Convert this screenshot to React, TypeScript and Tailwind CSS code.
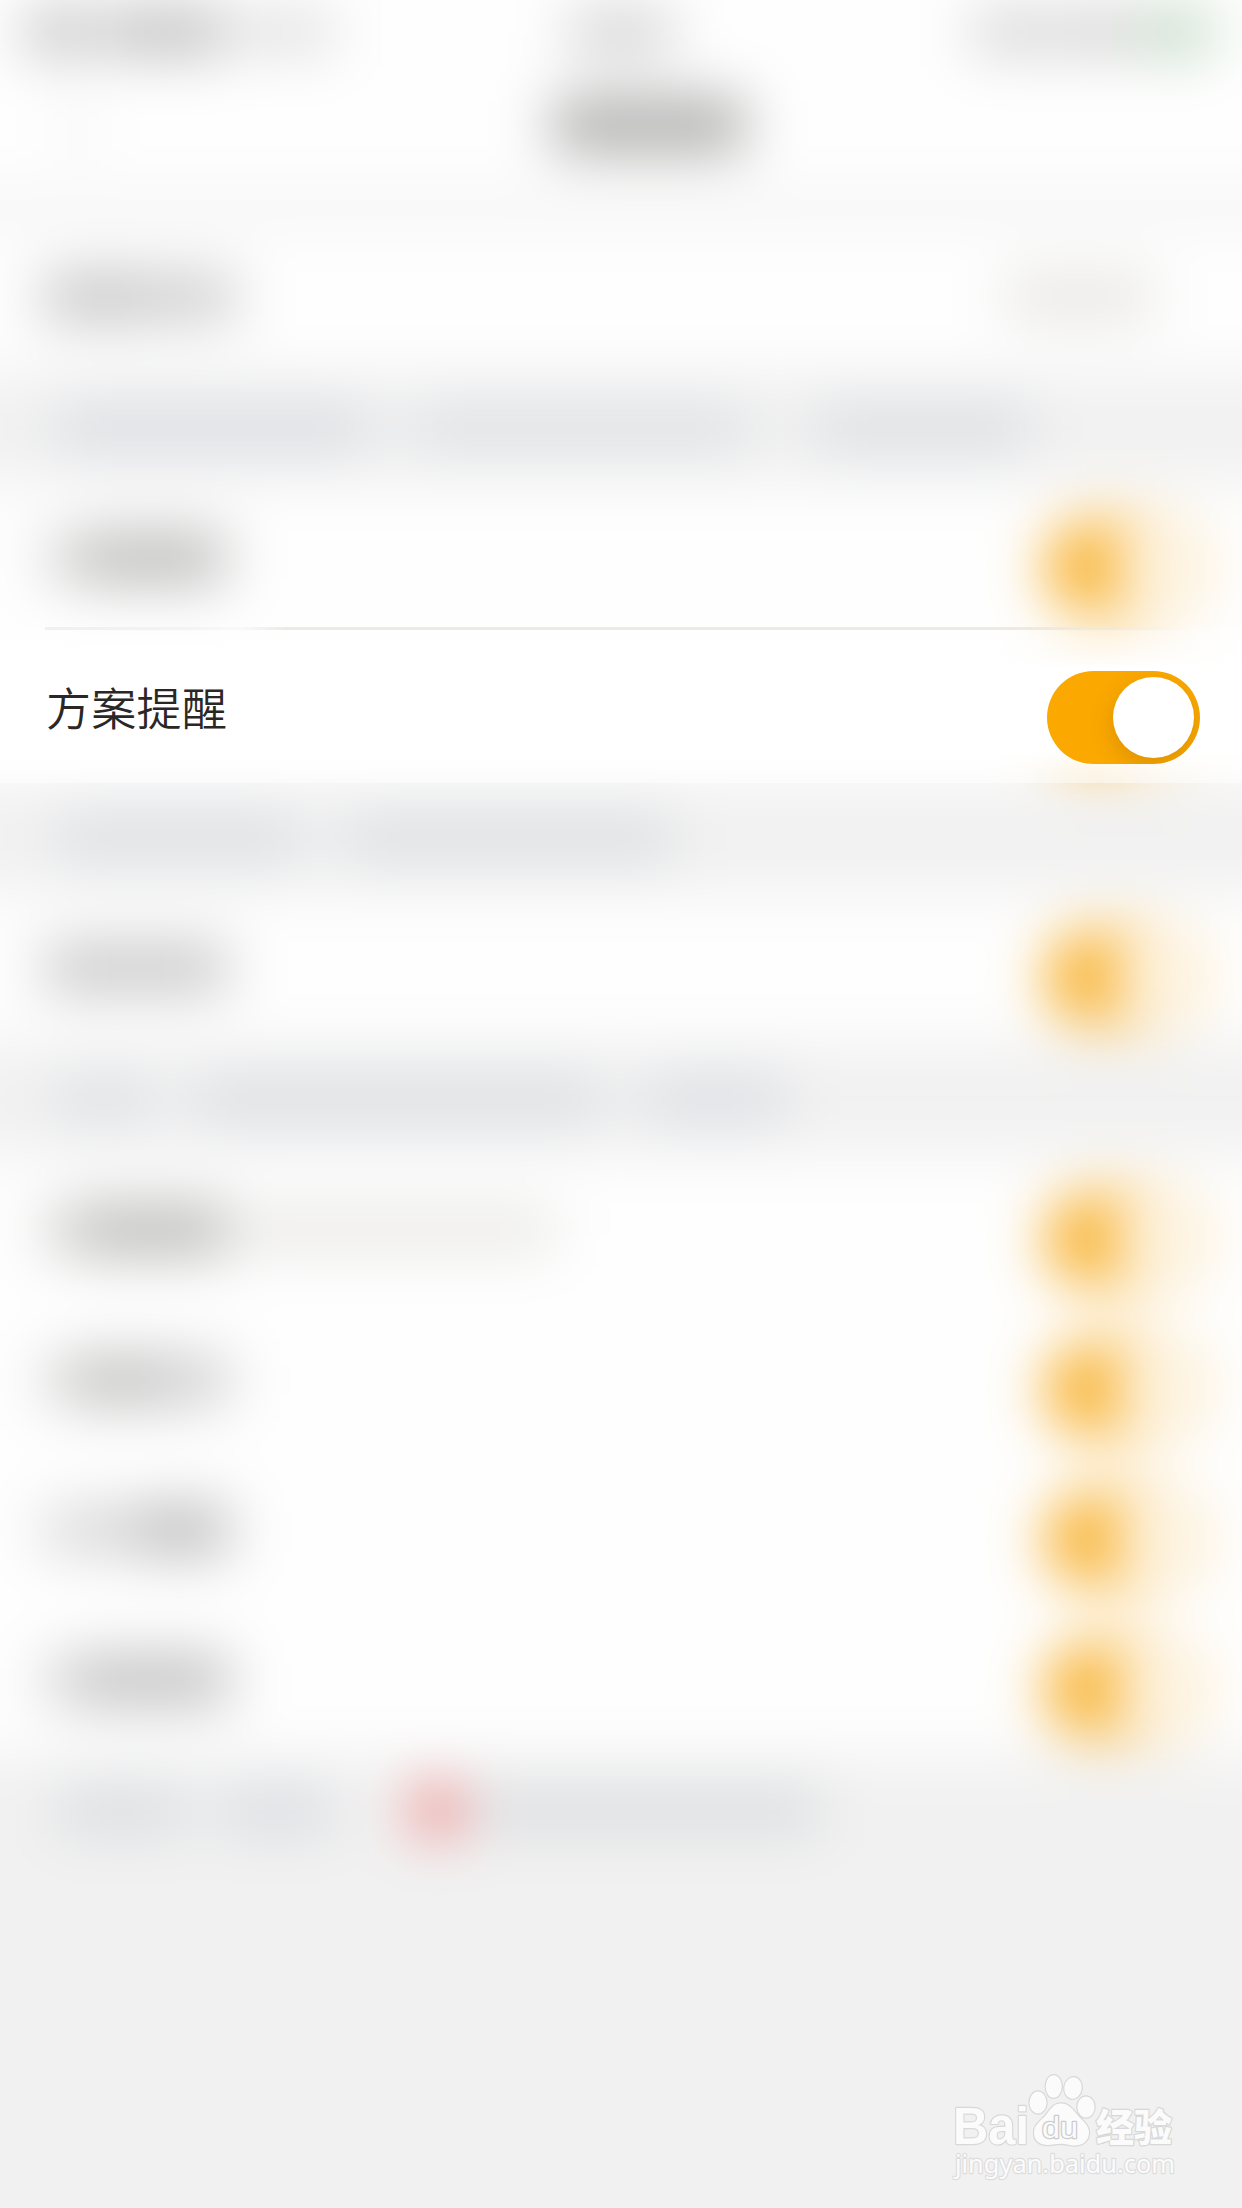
import clsx from 'clsx';

function Smudge({ className }: { className: string }) {
    return <span className={clsx('block shrink-0', className)} />;
}

function Toggle({ faded }: { faded?: boolean }) {
    return (
        <span
            className={clsx(
                'mt-[18px] flex h-[93px] w-[153px] shrink-0 items-center justify-end overflow-hidden rounded-full p-[6px]',
                faded ? 'bg-[#f8ae26]' : 'bg-[#fba800]',
            )}
        >
            <span
                className={clsx(
                    'h-[81px] w-[81px] rounded-full',
                    faded ? 'bg-[#fefaf3]' : 'bg-white shadow-[0_8px_24px_rgba(90,60,0,0.2)]',
                )}
            />
        </span>
    );
}

function Row({ children }: { children: React.ReactNode }) {
    return (
        <div className="flex h-[150px] items-center justify-between bg-[#fefefe] pl-[45px] pr-[43px]">
            <div className="flex items-center">{children}</div>
            <Toggle faded />
        </div>
    );
}

function BlurredPage() {
    return (
        <div className="-mx-[90px] -mt-[90px] flex h-[2388px] flex-col bg-[#f1f1f1] blur-[29px] [grid-area:1/1]">
            <div className="flex h-[285px] flex-col bg-[#fefefe] px-[90px] pt-[90px]">
                <div className="grid h-[64px] grid-cols-3 items-center">
                    <div className="flex items-center pl-[26px]">
                        <Smudge className="h-[42px] w-[66px] bg-[#bdbdbd]" />
                        <Smudge className="ml-3 h-[42px] w-[122px] bg-[#b8b8b8]" />
                        <Smudge className="ml-4 h-[36px] w-[92px] bg-[#dadada]" />
                    </div>
                    <Smudge className="h-[36px] w-[104px] justify-self-center bg-[#c8c8c8]" />
                    <div className="flex items-center justify-end pr-[30px]">
                        <Smudge className="h-[38px] w-[96px] bg-[#d0d0d0]" />
                        <Smudge className="ml-1 h-[38px] w-[70px] bg-[#cbcbcb]" />
                        <Smudge className="ml-1 h-[44px] w-[66px] bg-[#bed8c0]" />
                    </div>
                </div>
                <div className="flex h-[122px] items-center pl-[66px]">
                    <Smudge className="h-[44px] w-[22px] bg-[#eeeeee]" />
                    <Smudge className="ml-[465px] h-[52px] w-[192px] bg-[#a9a9a8]" />
                </div>
            </div>
            <div className="h-[27px] bg-[#f1f1f1]" />
            <div className="bg-[#fefefe] px-[90px]">
                <div className="flex h-[150px] items-center justify-between pl-[44px] pr-[90px]">
                    <div className="flex">
                        <Smudge className="h-[44px] w-[98px] bg-[#bebebe]" />
                        <Smudge className="h-[44px] w-[94px] bg-[#c8c8c8]" />
                    </div>
                    <Smudge className="h-[40px] w-[145px] bg-[#e4e2df]" />
                </div>
            </div>
            <div className="flex h-[111px] items-center px-[90px]">
                <Smudge className="ml-[57px] h-[40px] w-[312px] bg-[#d9dbe1]" />
                <Smudge className="ml-[44px] h-[40px] w-[334px] bg-[#dddfe3]" />
                <Smudge className="ml-[68px] h-[40px] w-[214px] bg-[#dadce1]" />
            </div>
            <div className="bg-[#fefefe] px-[90px]">
                <Row>
                    <Smudge className="h-[42px] w-[36px] bg-[#d3d3d2]" />
                    <Smudge className="h-[48px] w-[144px] bg-[#b7b7b6]" />
                </Row>
                <div className="flex h-[150px] items-center justify-end pr-[43px]">
                    <Toggle faded />
                </div>
            </div>
            <div className="flex h-[110px] items-center px-[90px]">
                <Smudge className="ml-[57px] h-[40px] w-[243px] bg-[#dadce1]" />
                <Smudge className="ml-[46px] h-[40px] w-[326px] bg-[#dadce0]" />
            </div>
            <div className="bg-[#fefefe] px-[90px]">
                <Row>
                    <Smudge className="h-[44px] w-[182px] bg-[#c1c1c1]" />
                </Row>
            </div>
            <div className="flex h-[112px] items-center px-[90px]">
                <Smudge className="ml-[57px] h-[40px] w-[95px] bg-[#dcdee3]" />
                <Smudge className="ml-[42px] h-[40px] w-[406px] bg-[#dadce1]" />
                <Smudge className="ml-[44px] h-[40px] w-[142px] bg-[#dadce2]" />
            </div>
            <div className="bg-[#fefefe] px-[90px]">
                <Row>
                    <Smudge className="h-[42px] w-[36px] bg-[#cfcfce]" />
                    <Smudge className="h-[48px] w-[148px] bg-[#b6b6b4]" />
                    <Smudge className="ml-4 h-[40px] w-[310px] bg-[#e8e7e5]" />
                </Row>
                <Row>
                    <Smudge className="h-[42px] w-[36px] bg-[#cfcfce]" />
                    <Smudge className="h-[46px] w-[80px] bg-[#babab9]" />
                    <Smudge className="h-[44px] w-[68px] bg-[#c9c9c9]" />
                </Row>
                <Row>
                    <Smudge className="h-[42px] w-[92px] bg-[#d2d2d2]" />
                    <Smudge className="h-[48px] w-[92px] bg-[#b8b8b8]" />
                </Row>
                <Row>
                    <Smudge className="h-[42px] w-[36px] bg-[#cfcfce]" />
                    <Smudge className="h-[46px] w-[148px] bg-[#bababa]" />
                </Row>
            </div>
            <div className="flex h-[110px] items-center px-[90px]">
                <Smudge className="ml-[57px] h-[40px] w-[130px] bg-[#d8dade]" />
                <Smudge className="ml-[34px] h-[40px] w-[112px] bg-[#d8dae0]" />
                <Smudge className="ml-[80px] h-[48px] w-[48px] rounded-full bg-[#ee6e6e]" />
                <Smudge className="ml-[14px] h-[40px] w-[346px] bg-[#d9dbde]" />
            </div>
        </div>
    );
}

function FocusRow() {
    return (
        <div className="mt-[627px] h-[156px] [grid-area:1/1]">
            <div className="relative h-full">
                <div className="absolute inset-0 bg-[linear-gradient(to_bottom,rgba(255,255,255,0.3)_0%,#fff_26%,#fff_80%,rgba(255,255,255,0.5)_100%)]" />
                <div className="relative">
                    <div className="ml-[45px] h-[3px] w-[1152px] bg-[linear-gradient(to_right,#f1f0ed_0%,#f3f3f1_12%,#f9f9f8_17%,#edeae4_21%,#edeae4_84%,#f3ead6_93%,#fefcf8_100%)]" />
                    <div className="mt-[3px] flex h-[150px] items-center justify-between pl-[46px] pr-[42px]">
                        <span className="-mt-[3px] font-['Noto_Sans_CJK_SC',sans-serif] text-[45px] leading-[60px] font-[350] tracking-[0.3px] text-[#2b2725]">方案提醒</span>
                        <Toggle />
                    </div>
                </div>
            </div>
        </div>
    );
}

function Watermark() {
    return (
        <div className="relative flex flex-col self-end justify-self-end pb-[8px] pr-[22px] [grid-area:1/1]">
            <svg
                viewBox="0 0 300 150"
                className="h-[150px] w-[300px]"
                fill="#fbfbfb"
                stroke="#d8d8d8"
                strokeWidth="2.4"
                strokeLinejoin="round"
                paintOrder="stroke"
            >
                <text x="33" y="93.5" fontSize="51" fontWeight="700" textLength="76" lengthAdjust="spacingAndGlyphs" fontFamily="Liberation Sans, sans-serif">Bai</text>
                <ellipse cx="118" cy="52.5" rx="8.5" ry="11" />
                <ellipse cx="133.7" cy="36.5" rx="8" ry="11.3" />
                <ellipse cx="153" cy="38" rx="8.7" ry="10.8" transform="rotate(8 153 38)" />
                <ellipse cx="166" cy="57" rx="8.6" ry="10.6" />
                <path d="M141 53.500c8 0 12 6 16 11 5 6 12 10 12 18 0 9-7 13-14 13-6 0-9-1.700-14-1.700s-8 1.200-13 1.200c-8 0-14-4-14-12 0-9 7-12 12-18 4-5 7-11.500 15-11.500z" />
                <text x="122" y="88" fontSize="29" textLength="36" lengthAdjust="spacingAndGlyphs" stroke="#cccccc" fontWeight="400" fontFamily="Liberation Sans, sans-serif">du</text>
                <text x="176" y="91" fontSize="38" fontWeight="900" textLength="76" fontFamily="Noto Sans CJK SC, sans-serif">经验</text>
                <text x="35" y="123" fontSize="26" textLength="220" lengthAdjust="spacingAndGlyphs" stroke="#dddddd" fontFamily="Noto Sans, sans-serif">jingyan.baidu.com</text>
            </svg>
        </div>
    );
}

export default function App() {
    return (
        <main className="grid h-[2208px] w-[1242px] grid-cols-[1242px] grid-rows-[2208px] overflow-hidden bg-[#f1f1f1]">
            <BlurredPage />
            <FocusRow />
            <Watermark />
        </main>
    );
}
